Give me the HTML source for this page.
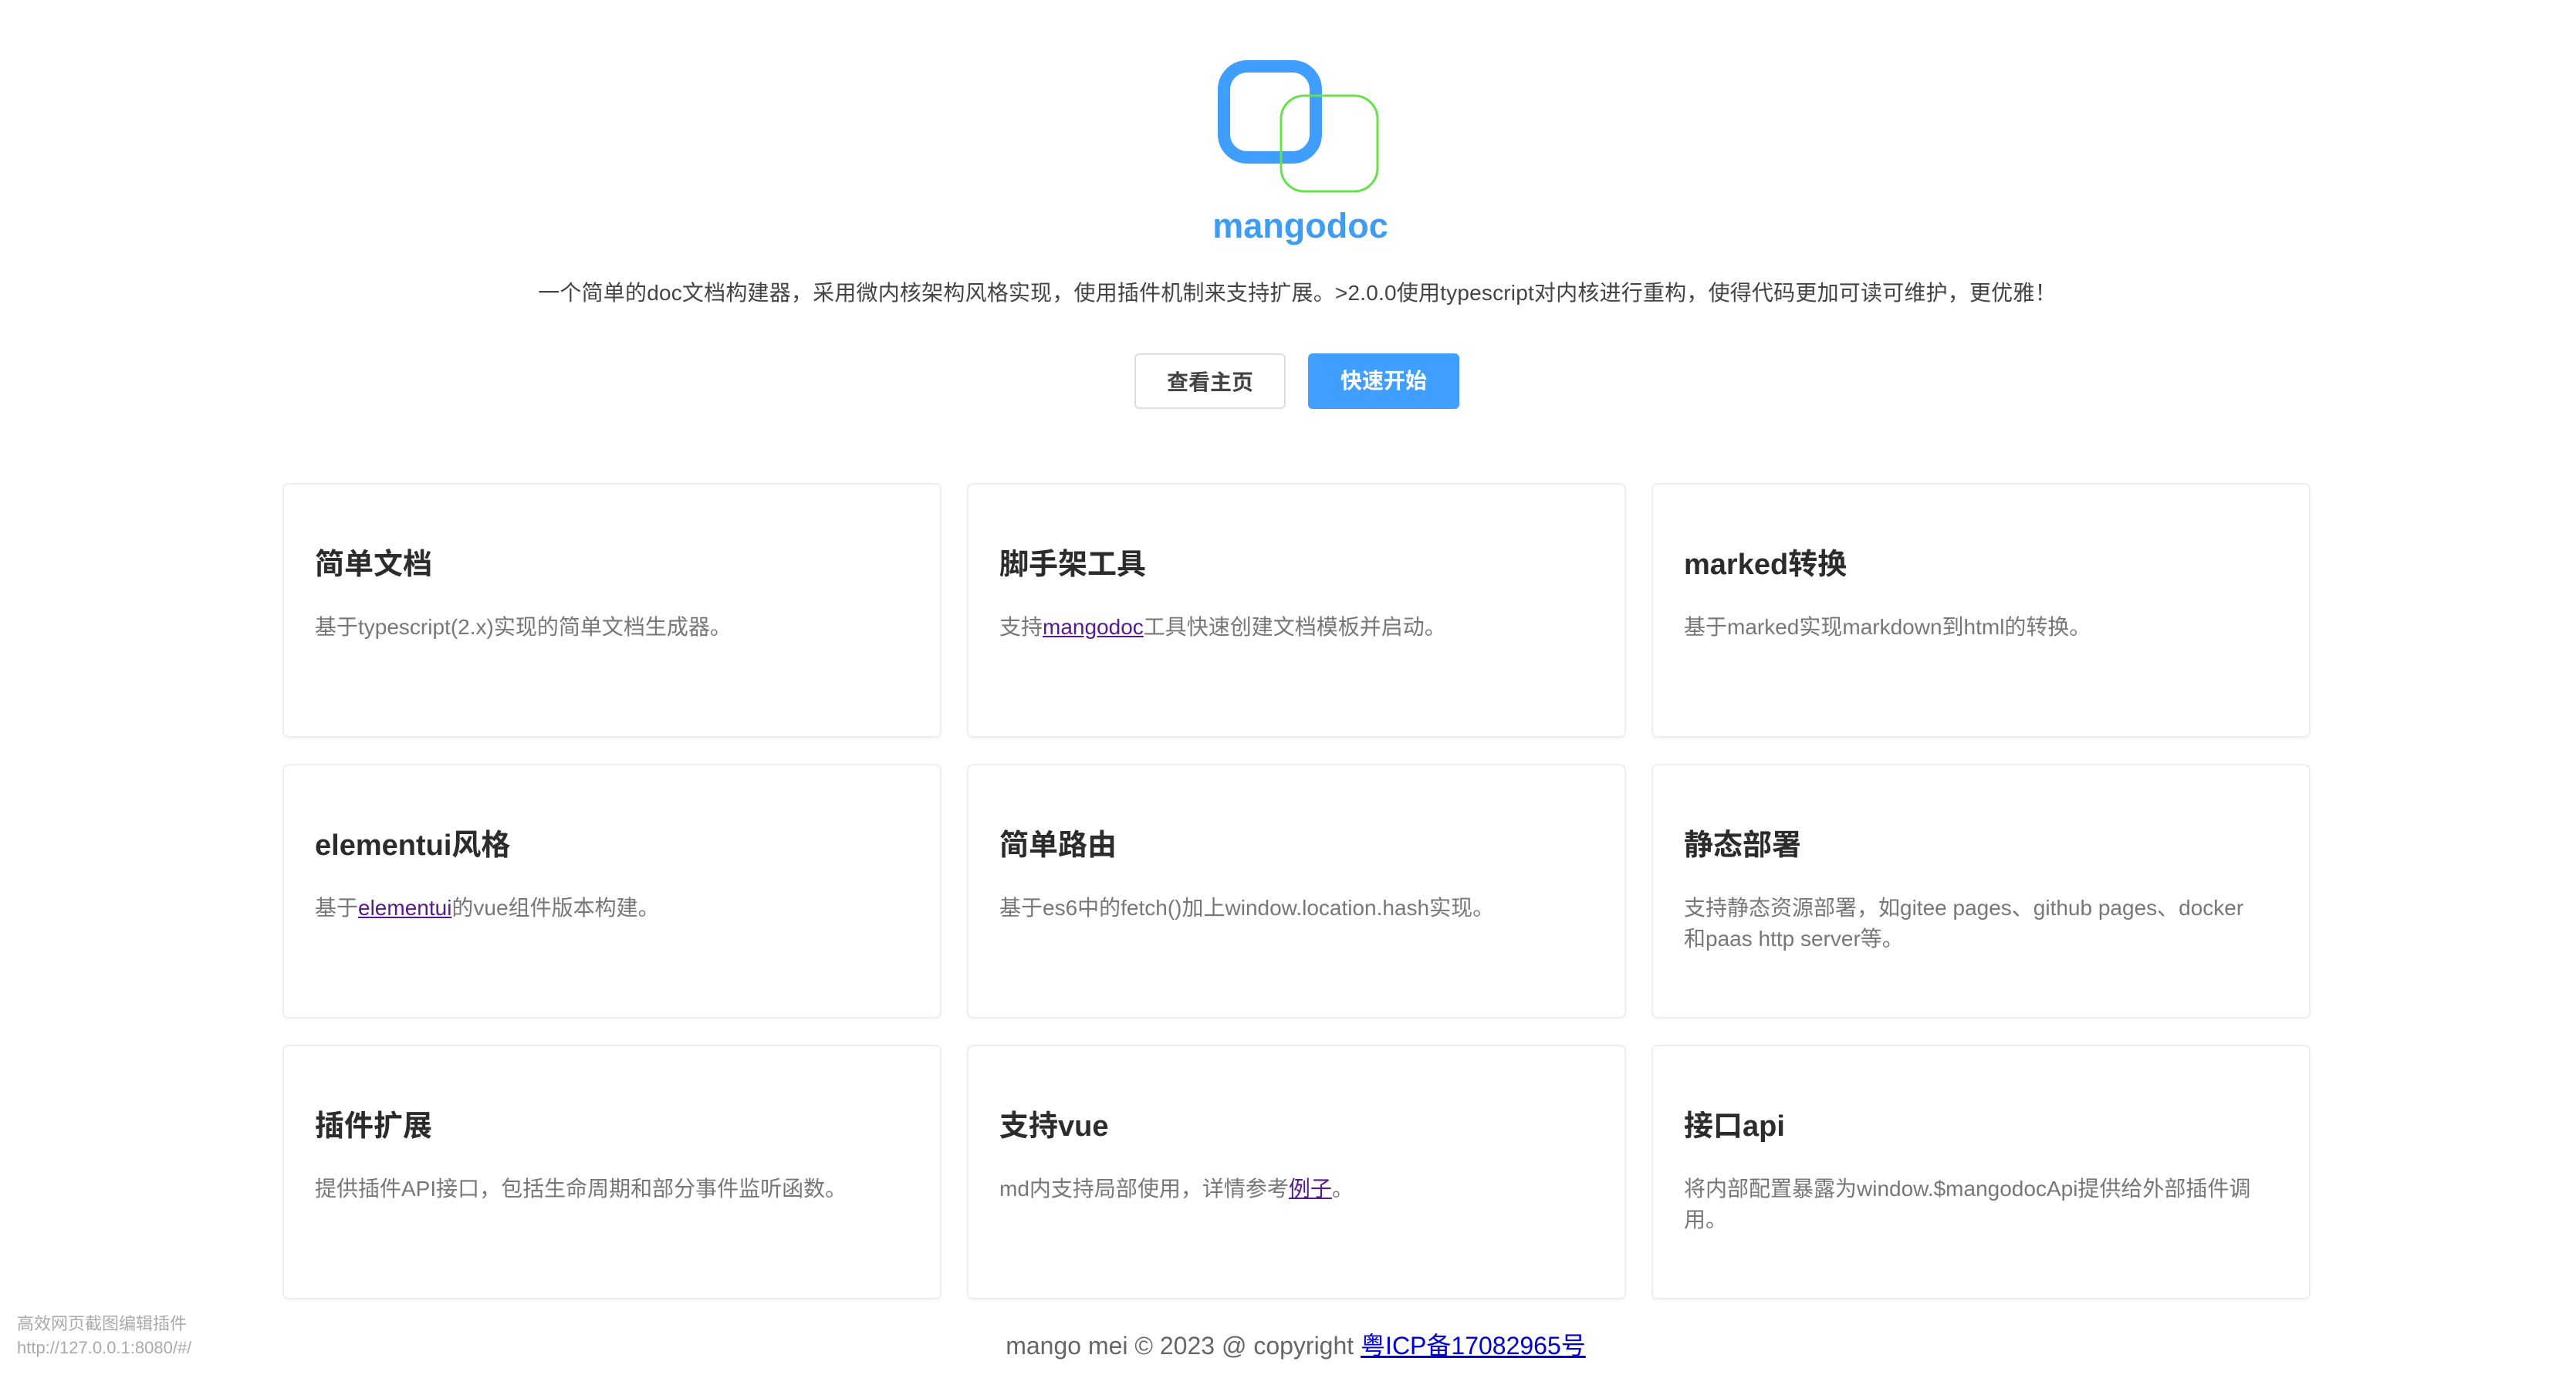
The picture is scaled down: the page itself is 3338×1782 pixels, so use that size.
<!DOCTYPE html>
<html><head><meta charset="utf-8"><style>
html,body{margin:0;padding:0;background:#fff;width:3338px;height:1782px;overflow:hidden;font-family:"Liberation Sans","Noto Sans CJK SC",sans-serif;}
.logo{position:absolute;left:0;top:0}
.brand{position:absolute;left:16px;width:3338px;top:267px;text-align:center;font-size:45px;font-weight:bold;color:#3e9cf2}
.desc{position:absolute;left:12px;width:3338px;top:358px;text-align:center;font-size:28px;color:#444;letter-spacing:0.2px}
.btn{position:absolute;top:458px;height:72px;line-height:72px;text-align:center;font-size:28px;font-weight:bold;border-radius:6px;box-sizing:border-box}
.b1{left:1470px;width:196px;border:2px solid #dcdfe6;color:#444;background:#fff}
.b2{left:1695px;width:196px;background:#409eff;color:#fff}
.card{position:absolute;width:854px;height:330px;border:2px solid #eceef2;border-radius:8px;box-sizing:border-box;box-shadow:0 2px 4px rgba(0,0,0,.04)}
.card h3{position:absolute;left:40px;top:72px;margin:0;font-size:38px;font-weight:bold;color:#2c2c2c}
.card p{position:absolute;left:40px;top:165px;right:30px;margin:0;font-size:28px;line-height:40px;color:#777}
.card a{color:#551a8b;text-decoration:underline}
.foot{position:absolute;left:10px;width:3338px;top:1719px;text-align:center;font-size:32px;color:#666}
.foot a{color:#0000cc;text-decoration:underline}
.corner{position:absolute;left:22px;top:1700px;font-size:22px;line-height:31px;color:#aaa}
</style></head><body>
<svg class="logo" width="3338" height="260">
<rect x="1586" y="86" width="119" height="118" rx="30" fill="none" stroke="#409eff" stroke-width="16"/>
<rect x="1660" y="124" width="125" height="124" rx="30" fill="none" stroke="#67e04c" stroke-width="3"/>
</svg>
<div class="brand">mangodoc</div>
<div class="desc">一个简单的doc文档构建器，采用微内核架构风格实现，使用插件机制来支持扩展。&gt;2.0.0使用typescript对内核进行重构，使得代码更加可读可维护，更优雅！</div>
<div class="btn b1">查看主页</div>
<div class="btn b2">快速开始</div>

<div class="card" style="left:366px;top:626px"><h3>简单文档</h3><p>基于typescript(2.x)实现的简单文档生成器。</p></div>
<div class="card" style="left:1253px;top:626px"><h3>脚手架工具</h3><p>支持<a>mangodoc</a>工具快速创建文档模板并启动。</p></div>
<div class="card" style="left:2140px;top:626px"><h3>marked转换</h3><p>基于marked实现markdown到html的转换。</p></div>

<div class="card" style="left:366px;top:990px"><h3>elementui风格</h3><p>基于<a>elementui</a>的vue组件版本构建。</p></div>
<div class="card" style="left:1253px;top:990px"><h3>简单路由</h3><p>基于es6中的fetch()加上window.location.hash实现。</p></div>
<div class="card" style="left:2140px;top:990px"><h3>静态部署</h3><p>支持静态资源部署，如gitee pages、github pages、docker<br>和paas http server等。</p></div>

<div class="card" style="left:366px;top:1354px"><h3>插件扩展</h3><p>提供插件API接口，包括生命周期和部分事件监听函数。</p></div>
<div class="card" style="left:1253px;top:1354px"><h3>支持vue</h3><p>md内支持局部使用，详情参考<a>例子</a>。</p></div>
<div class="card" style="left:2140px;top:1354px"><h3>接口api</h3><p>将内部配置暴露为window.$mangodocApi提供给外部插件调<br>用。</p></div>

<div class="foot">mango mei © 2023 @ copyright <a>粤ICP备17082965号</a></div>
<div class="corner">高效网页截图编辑插件<br>http://127.0.0.1:8080/#/</div>
</body></html>
